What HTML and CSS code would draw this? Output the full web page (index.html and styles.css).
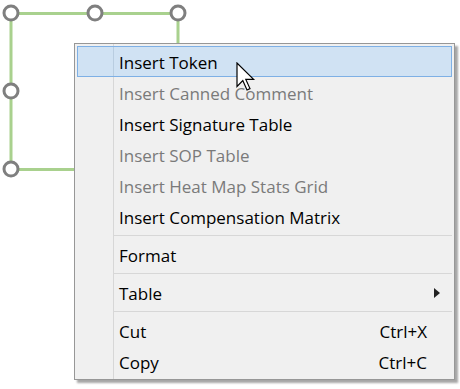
FILE: index.html
```html
<!DOCTYPE html>
<html lang="en">
<head>
<meta charset="UTF-8">
<title>Context menu</title>
<link rel="stylesheet" href="styles.css">
</head>
<body>
<div class="canvas">
    <svg class="shape" width="460" height="389" viewBox="0 0 460 389">
        <g stroke="#a9d18e" stroke-width="3" fill="none">
            <path d="M11 13.5 H178 V60"/>
            <path d="M11 13.5 V169.5 H120"/>
        </g>
        <g stroke="#7f7f7f" stroke-width="3" fill="#fff">
            <circle cx="11" cy="13" r="7"/>
            <circle cx="95" cy="13" r="7"/>
            <circle cx="178" cy="13" r="7"/>
            <circle cx="11" cy="91" r="7"/>
            <circle cx="11" cy="169" r="7"/>
        </g>
    </svg>

    <div class="menu">
        <div class="item hover">Insert Token</div>
        <div class="item disabled">Insert Canned Comment</div>
        <div class="item">Insert Signature Table</div>
        <div class="item disabled">Insert SOP Table</div>
        <div class="item disabled">Insert Heat Map Stats Grid</div>
        <div class="item">Insert Compensation Matrix</div>
        <div class="sep"></div>
        <div class="item">Format</div>
        <div class="sep"></div>
        <div class="item">Table <span class="arrow"></span></div>
        <div class="sep"></div>
        <div class="item">Cut <span class="key">Ctrl+X</span></div>
        <div class="item">Copy <span class="key">Ctrl+C</span></div>
    </div>

    <!-- mouse pointer -->
    <svg class="cursor" width="20" height="30" viewBox="0 0 20 30">
        <path d="M1 1 V24.5 L6.8 18.6 L11 28 L14 26.6 L9.8 17.4 H17.6 Z" fill="#fff" stroke="#000" stroke-width="1.2" stroke-linejoin="miter"/>
    </svg>
</div>
</body>
</html>
```

FILE: styles.css
```css
body {
    margin: 0;
    padding: 0;
    background-color: #fff;
    font-family: "Open Sans", "Noto Sans", sans-serif;
}

.canvas {
    position: relative;
    width: 460px;
    height: 389px;
    overflow: hidden;
}

.shape {
    display: block;
}

.menu {
    position: absolute;
    left: 74px;
    top: 43px;
    width: 375px;
    padding: 2px;
    border: 1px solid #979797;
    background-color: #f0f0f0;
    background-image: linear-gradient(to right, transparent 38px, #d7d7d7 38px, #d7d7d7 39px, transparent 39px);
    box-shadow: 3px 3px 2px rgba(0, 0, 0, 0.35);
}

.item {
    display: flex;
    align-items: center;
    height: 28px;
    padding: 1px 24px 0 41px;
    border: 1px solid transparent;
    font-size: 17px;
    color: #000;
}

.item.hover {
    background-color: #d0e2f3;
    background-image: linear-gradient(to right, transparent 35px, #b9cde0 35px, #b9cde0 36px, transparent 36px);
    border-color: #7eb0e5;
}

.item.disabled {
    color: #7a7a7a;
}

.key {
    margin-left: auto;
}

.arrow {
    margin-left: auto;
    margin-right: -13px;
    width: 0;
    height: 0;
    border-top: 5px solid transparent;
    border-bottom: 5px solid transparent;
    border-left: 6px solid #222;
}

.sep {
    height: 7px;
    margin-left: 37px;
    background: linear-gradient(#d7d7d7, #d7d7d7) no-repeat 0 3px / 100% 1px;
}

.cursor {
    position: absolute;
    left: 236px;
    top: 62px;
}
```
